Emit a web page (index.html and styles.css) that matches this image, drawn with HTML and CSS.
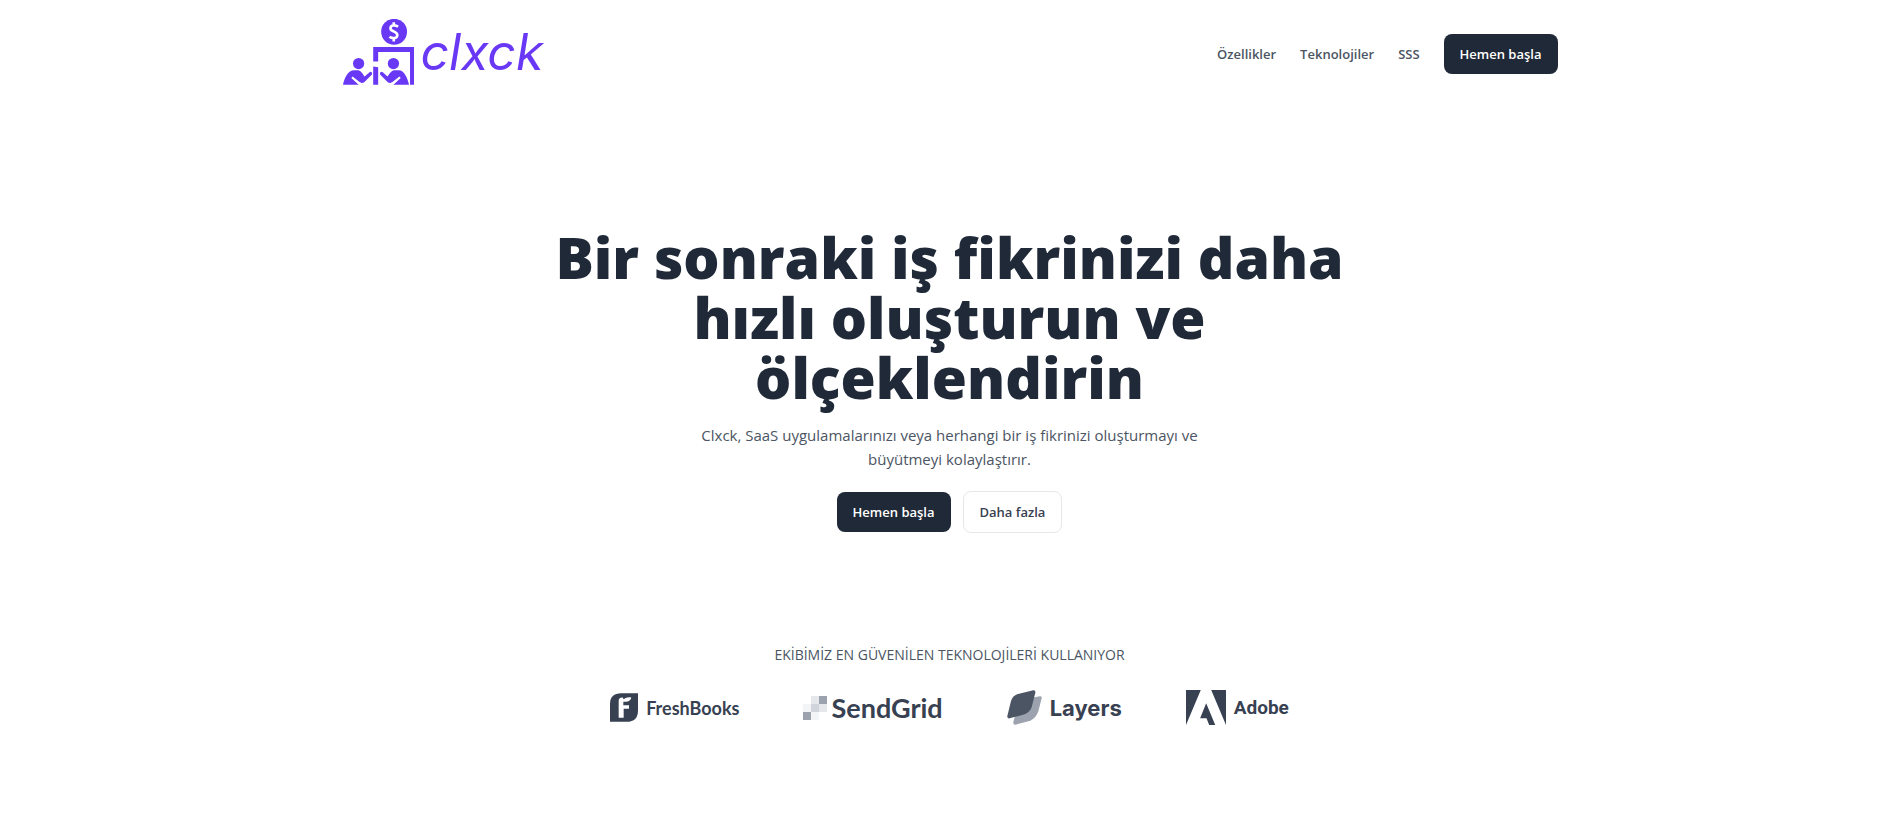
FILE: index.html
```html
<!DOCTYPE html>
<html lang="tr">
<head>
<meta charset="utf-8">
<meta name="viewport" content="width=device-width, initial-scale=1">
<title>Clxck</title>
<link rel="stylesheet" href="styles.css">
</head>
<body>
<header class="header">
  <a class="brand" href="#">
    <svg class="brand-icon" viewBox="38 33 217 198" aria-hidden="true">
      <circle cx="192" cy="71" r="39" fill="#6938f5"/>
      <path d="M204 56C199 52 194 51 189 52C180 53 178 64 187 68L195 72C205 77 203 89 193 90C187 91 182 89 178 86M191 42V54M191 89V100" fill="none" stroke="#fff" stroke-width="8"/>
      <g fill="#6938f5">
        <path d="M129 117H252V231H240V132H144V161H129Z"/>
        <path d="M129 176L144 178V231H129Z"/>
        <circle cx="85" cy="167" r="17"/>
        <circle cx="190" cy="167" r="17"/>
        <path d="M38 231C42 210 53 187 72 187H83C91 187 97 197 103 206L119 192Q126 191 126 199L102 223Q94 228 87 222L67 206L63 210L85 231Z"/>
        <path d="M237 231C233 210 222 187 206 187H193C185 187 178 197 172 206L157 192Q149 191 149 199L173 223Q181 228 188 222L208 206L212 210L190 231Z"/>
      </g>
    </svg>
    <span class="brand-name">clxck</span>
  </a>
  <nav class="nav">
    <a class="nav-link" href="#">Özellikler</a>
    <a class="nav-link" href="#">Teknolojiler</a>
    <a class="nav-link" href="#">SSS</a>
    <button class="button button-dark" type="button">Hemen başla</button>
  </nav>
</header>
<main>
  <section class="hero">
    <h1 class="hero-title">Bir sonraki iş fikrinizi daha hızlı oluşturun ve ölçeklendirin</h1>
    <p class="hero-text">Clxck, SaaS uygulamalarınızı veya herhangi bir iş fikrinizi oluşturmayı ve büyütmeyi kolaylaştırır.</p>
    <div class="hero-actions">
      <button class="button button-dark" type="button">Hemen başla</button>
      <button class="button button-light" type="button">Daha fazla</button>
    </div>
  </section>
  <section class="partners">
    <h2 class="partners-title">EKİBİMİZ EN GÜVENİLEN TEKNOLOJİLERİ KULLANIYOR</h2>
    <ul class="partners-list">
      <li class="partner">
        <svg width="28" height="29" viewBox="0 0 84 86" aria-hidden="true">
          <path d="M0 86V32Q0 0 34 0H84V52Q84 86 50 86Z" fill="#374151"/>
          <path d="M26 74V22Q27 12 38 13L41 18Q49 11 64 13Q62 25 47 26H40V36H57V47H41V74Z" fill="#fff"/>
        </svg>
        <span class="name-freshbooks">FreshBooks</span>
      </li>
      <li class="partner partner-tight">
        <svg width="24" height="24" viewBox="0 0 24 24" aria-hidden="true">
          <path d="M16 0h8v8h-8zM0 16h8v8H0z" fill="#9ca3af"/>
          <path d="M8 0h8v8H8zM16 8h8v8h-8z" fill="#e5e7eb"/>
          <path d="M8 8h8v8H8z" fill="#d1d5db"/>
          <path d="M0 8h8v8H0zM8 16h8v8H8z" fill="#f3f4f6"/>
        </svg>
        <span class="name-sendgrid">SendGrid</span>
      </li>
      <li class="partner">
        <svg width="35" height="35" viewBox="51 34 105 105" aria-hidden="true">
          <path d="M88 64L150 53Q156 52 155 59L145 98Q139 117 121 126L77 138Q69 139 70 130Z" fill="#9ca3af"/>
          <path d="M84 46L130 35Q137 34 136 42L125 85Q120 101 104 107L59 119Q51 121 52 112L63 67Q68 51 84 46Z" fill="#4b5563"/>
        </svg>
        <span class="name-layers">Layers</span>
      </li>
      <li class="partner">
        <svg width="40" height="35" viewBox="48 33 119 104" aria-hidden="true">
          <path d="M48 33H92L48 137ZM123 33H167V137ZM108 72L135 137H117L109 117H90Z" fill="#374151"/>
        </svg>
        <span class="name-adobe">Adobe</span>
      </li>
    </ul>
  </section>
</main>
</body>
</html>
```
FILE: styles.css
```css
* {
  box-sizing: border-box;
}

body {
  margin: 0;
  padding-left: 5px;
  background: #fff;
  color: #1f2937;
  font-family: "Segoe UI", "Open Sans", "Noto Sans", sans-serif;
  font-size: 14px;
  line-height: 20px;
}

.header {
  display: flex;
  align-items: center;
  justify-content: space-between;
  max-width: 1280px;
  margin: 0 auto;
  padding: 16px 32px;
}

.brand {
  display: flex;
  align-items: center;
  gap: 6px;
  padding: 3px 0 6px 1px;
  color: #6938f5;
  text-decoration: none;
}

.brand-icon {
  width: 72px;
  height: 66px;
}

.brand-name {
  font-family: Inter, sans-serif;
  font-size: 50px;
  font-style: italic;
  font-weight: 400;
  line-height: 60px;
}

.nav {
  display: flex;
  align-items: center;
  gap: 24px;
}

.nav-link {
  color: #4b5563;
  font-size: 13px;
  font-weight: 600;
  text-decoration: none;
}

.button {
  padding: 10px 16px;
  border: 0;
  border-radius: 8px;
  font: inherit;
  font-size: 13px;
  font-weight: 600;
}

.button-dark {
  background: #1f2937;
  color: #fff;
}

.button-light {
  border: 1px solid #e5e7eb;
  background: #fff;
  color: #374151;
}

.hero {
  display: flex;
  flex-direction: column;
  align-items: center;
  gap: 20px;
  padding: 120px 32px 112px;
  text-align: center;
}

.hero-title {
  max-width: 800px;
  margin: 0 0 -4px;
  font-size: 57px;
  font-weight: 800;
  line-height: 60px;
}

.hero-text {
  max-width: 512px;
  margin: 0;
  color: #4b5563;
  font-size: 15px;
  line-height: 24px;
}

.hero-actions {
  display: flex;
  align-items: center;
  gap: 12px;
}

.partners {
  display: flex;
  flex-direction: column;
  align-items: center;
  gap: 25px;
  padding: 0 32px;
}

.partners-title {
  margin: 0;
  color: #4b5563;
  font-size: 14px;
  font-weight: 500;
}

.partners-list {
  display: flex;
  flex-wrap: wrap;
  gap: 64px;
  margin: 0;
  padding: 0;
  list-style: none;
}

.partner {
  display: flex;
  align-items: center;
  gap: 8px;
  color: #374151;
  font-weight: 700;
}

.partner-tight {
  gap: 4px;
}

.name-freshbooks {
  font-family: Lato, sans-serif;
  font-size: 18px;
}

.name-sendgrid {
  font-family: Lato, sans-serif;
  font-size: 27px;
}

.name-layers {
  font-family: Inter, sans-serif;
  font-size: 22px;
}

.name-adobe {
  font-family: Roboto, sans-serif;
  font-size: 19px;
}
```
